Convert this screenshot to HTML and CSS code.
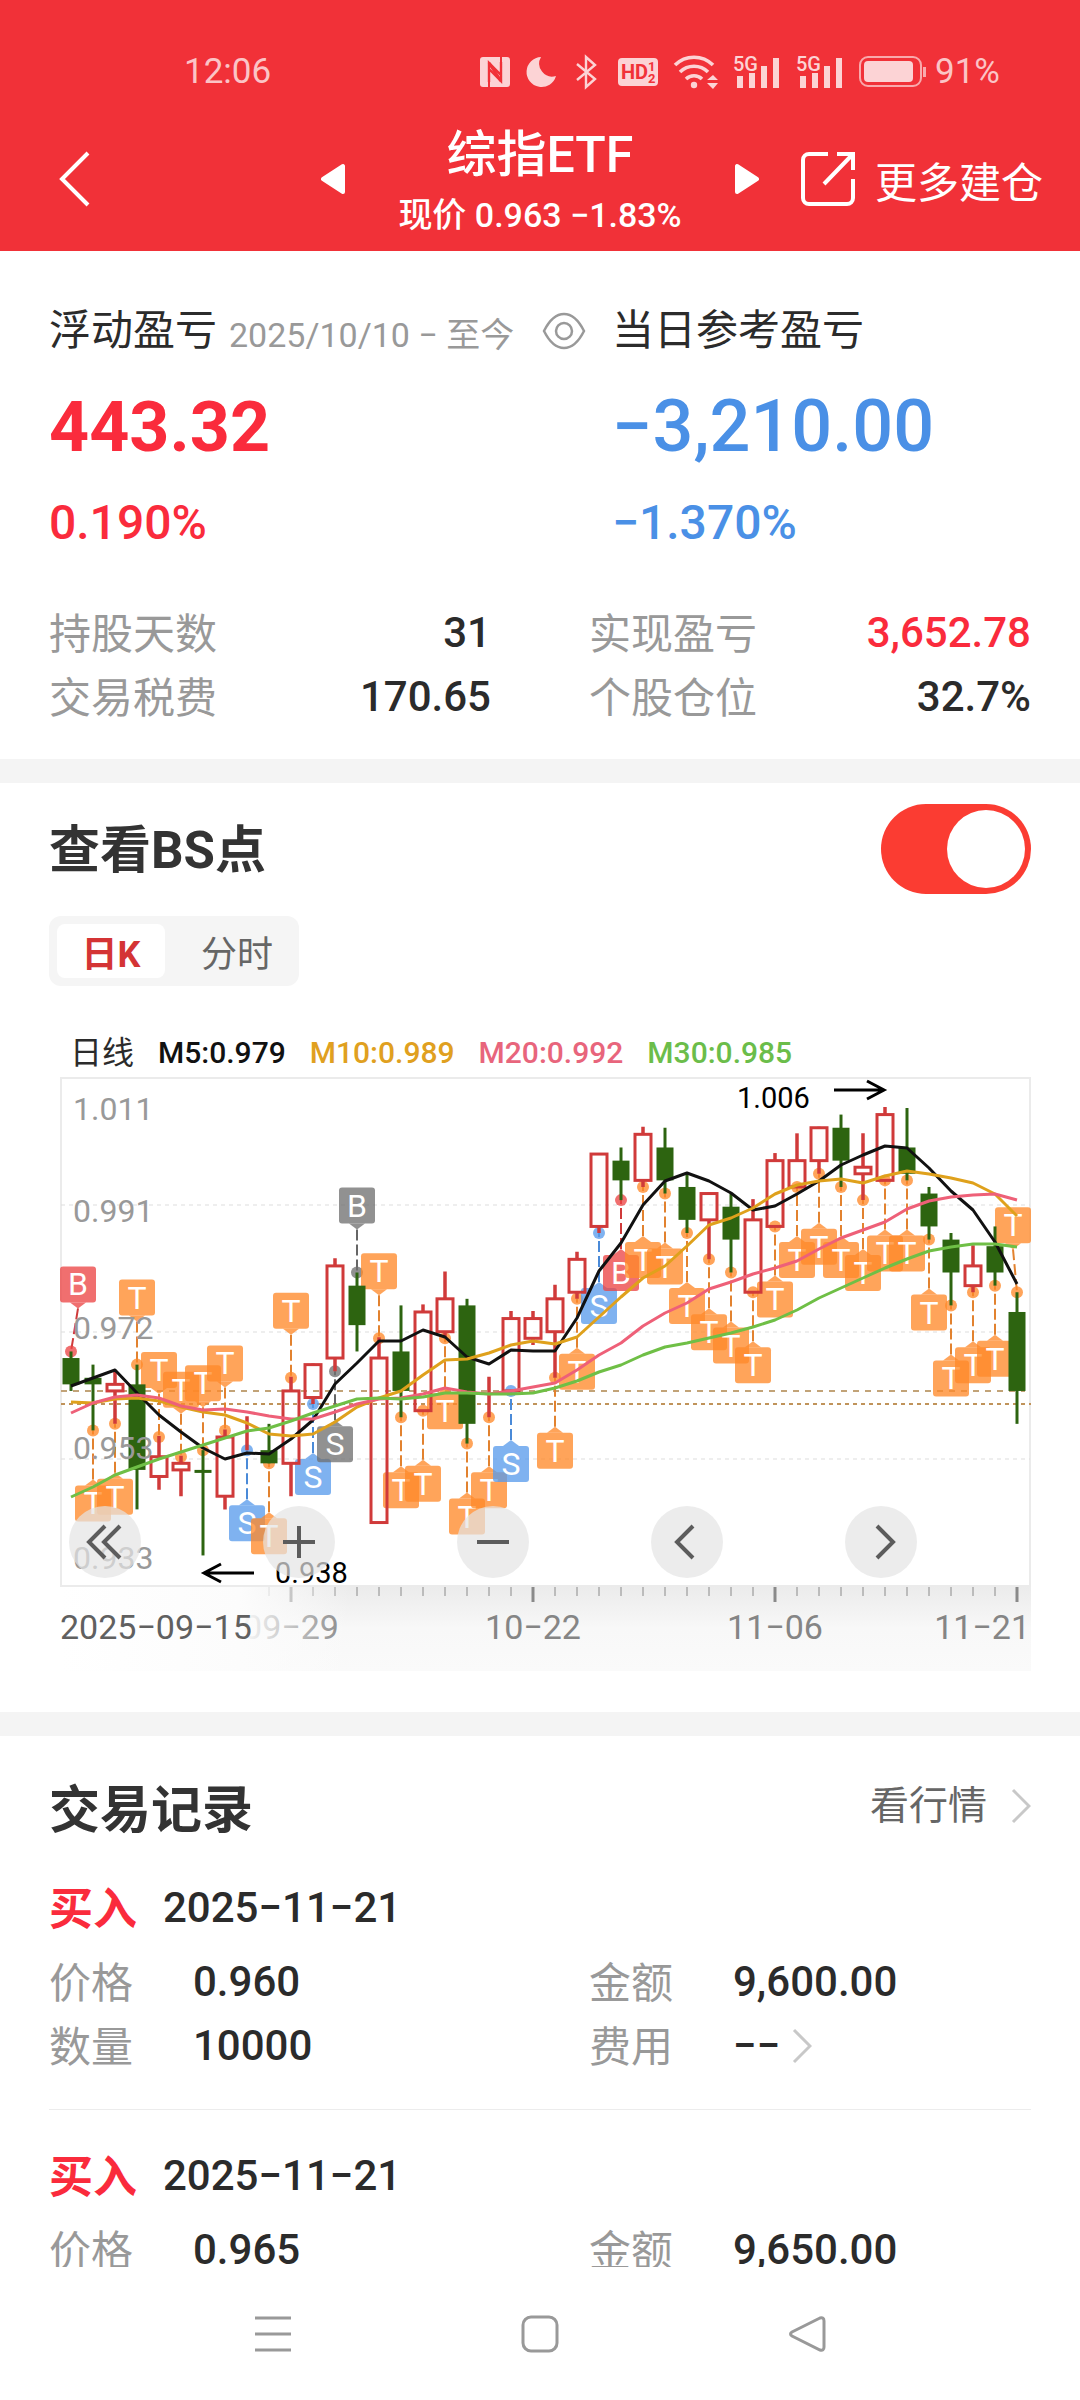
FILE: index.html
```html
<!DOCTYPE html>
<html lang="zh-CN">
<head>
    <meta charset="UTF-8">
    <meta name="viewport" content="width=device-width, initial-scale=1.0">
    <title>综指ETF</title>
    <link rel="stylesheet" href="styles.css">
</head>
<body>
    <div class="page">
        <header class="header">
            <div class="status-bar">
                <span class="time">12:06</span>
                <div class="status-icons">
                    <svg width="30" height="32" viewBox="0 0 30 32">
                        <rect x="0" y="1" width="30" height="30" rx="3" fill="#fcd3d5"/>
                        <path d="M9 26V7l12 12V6M21 6v19L9 13" fill="none" stroke="#f13138" stroke-width="2.4"/>
                        <path d="M9 7l12 18" stroke="#f13138" stroke-width="3"/>
                        <path d="M9 26v6M21 6V0" stroke="#f13138" stroke-width="2"/>
                    </svg>
                    <svg width="32" height="32" viewBox="0 0 32 32">
                        <path d="M15 1A15 15 0 1 0 30 20A13 13 0 0 1 15 1Z" fill="#fcd3d5"/>
                    </svg>
                    <svg width="28" height="34" viewBox="0 0 28 34">
                        <path d="M3 9l18 15-9 8V2l9 8L3 25" fill="none" stroke="#fcd3d5" stroke-width="2.4"/>
                    </svg>
                    <svg width="40" height="30" viewBox="0 0 40 30">
                        <rect x="0" y="1" width="40" height="28" rx="4" fill="#fcd3d5"/>
                        <text x="3" y="22" class="hd-text">HD</text>
                        <text x="30" y="14" class="hd-small">1</text>
                        <text x="30" y="26" class="hd-small">2</text>
                    </svg>
                    <svg width="43" height="34" viewBox="0 0 43 34">
                        <g fill="none" stroke="#fcd3d5" stroke-width="3.6">
                            <path d="M1 10a27 27 0 0 1 38 0"/>
                            <path d="M6 17a20 20 0 0 1 28 0"/>
                            <path d="M12 24a11.500 11.500 0 0 1 16 0"/>
                        </g>
                        <circle cx="20" cy="30" r="3.200" fill="#fcd3d5"/>
                        <path d="M39 20l5 5H33zM39 34l5-6H33z" fill="#fcd3d5"/>
                    </svg>
                    <svg width="47" height="34" viewBox="0 0 47 34">
                        <text x="0" y="16" class="net-text">5G</text>
                        <path d="M7 21v12M19 18v15M31 11v22M43 3v30" stroke="#fcd3d5" stroke-width="6"/>
                    </svg>
                    <svg width="47" height="34" viewBox="0 0 47 34">
                        <text x="0" y="16" class="net-text">5G</text>
                        <path d="M7 21v12M19 18v15M31 11v22M43 3v30" stroke="#fcd3d5" stroke-width="6"/>
                    </svg>
                    <div class="battery">
                        <svg width="68" height="32" viewBox="0 0 68 32">
                            <rect x="1" y="1" width="61" height="29" rx="8" fill="none" stroke="#f9a9ac" stroke-width="2"/>
                            <rect x="5" y="5" width="49" height="21" rx="4" fill="#fcd3d5"/>
                            <path d="M65.500 11v10" stroke="#f9a9ac" stroke-width="3"/>
                        </svg>
                        <span>91%</span>
                    </div>
                </div>
            </div>
            <div class="nav">
                <button class="nav-back" aria-label="返回">
                    <svg width="32" height="56" viewBox="0 0 32 56"><path d="M29 2L3 28l26 26" fill="none" stroke="#fff" stroke-width="4"/></svg>
                </button>
                <div class="nav-center">
                    <button aria-label="上一个">
                        <svg width="24" height="32" viewBox="0 0 24 32"><path d="M22 3v26L2 16z" fill="#fff" stroke="#fff" stroke-width="4" stroke-linejoin="round"/></svg>
                    </button>
                    <div class="stock">
                        <h1>综指ETF</h1>
                        <p>现价 0.963 −1.83%</p>
                    </div>
                    <button aria-label="下一个">
                        <svg width="24" height="32" viewBox="0 0 24 32"><path d="M2 3v26l20-13z" fill="#fff" stroke="#fff" stroke-width="4" stroke-linejoin="round"/></svg>
                    </button>
                </div>
                <a class="nav-more" href="#">
                    <svg width="54" height="54" viewBox="0 0 54 54">
                        <path d="M27 2H8a6 6 0 0 0-6 6v38a6 6 0 0 0 6 6h38a6 6 0 0 0 6-6V27" fill="none" stroke="#fff" stroke-width="4"/>
                        <path d="M36 2h16v16M51 3L23 32" fill="none" stroke="#fff" stroke-width="4"/>
                    </svg>
                    更多建仓
                </a>
            </div>
        </header>

        <main class="content">
            <section class="summary">
                <div class="profit">
                    <div>
                        <div class="profit-label">
                            <span>浮动盈亏</span>
                            <small>2025/10/10 − 至今</small>
                            <button class="eye" aria-label="隐藏金额">
                                <svg width="44" height="40" viewBox="0 0 44 40">
                                    <path d="M2 20C8 8 15 3 22 3s14 5 20 17c-6 12-13 17-20 17S8 32 2 20z" fill="none" stroke="#999" stroke-width="2.5"/>
                                    <circle cx="22" cy="20" r="8" fill="none" stroke="#999" stroke-width="2.5"/>
                                </svg>
                            </button>
                        </div>
                        <div class="amount amount-bold red">443.32</div>
                        <div class="percent red">0.190%</div>
                    </div>
                    <div>
                        <div class="profit-label">当日参考盈亏</div>
                        <div class="amount blue">−3,210.00</div>
                        <div class="percent blue">−1.370%</div>
                    </div>
                </div>
                <dl class="stats">
                    <div><dt>持股天数</dt><dd>31</dd></div>
                    <div><dt>实现盈亏</dt><dd class="red">3,652.78</dd></div>
                    <div><dt>交易税费</dt><dd>170.65</dd></div>
                    <div><dt>个股仓位</dt><dd>32.7%</dd></div>
                </dl>
            </section>

            <section class="bs">
                <div class="section-head">
                    <h2><label for="bs-switch">查看BS点</label></h2>
                    <input type="checkbox" id="bs-switch" class="switch" checked>
                </div>
                <div class="tabs">
                    <button class="tab active">日K</button>
                    <button class="tab">分时</button>
                </div>
                <div class="legend">
                    <span class="legend-title">日线</span>
                    <span class="m5">M5:0.979</span>
                    <span class="m10">M10:0.989</span>
                    <span class="m20">M20:0.992</span>
                    <span class="m30">M30:0.985</span>
                </div>
                <div class="chart">
                    <svg id="kline" viewBox="0 0 982 594"></svg>
                    <div class="chart-tools">
                        <button aria-label="最早">
                            <svg width="40" height="40" viewBox="0 0 40 40"><path d="M20 4L4 20l16 16M35 4L19 20l16 16"/></svg>
                        </button>
                        <button aria-label="放大">
                            <svg width="40" height="40" viewBox="0 0 40 40"><path d="M20 4v32M4 20h32"/></svg>
                        </button>
                        <button aria-label="缩小">
                            <svg width="40" height="40" viewBox="0 0 40 40"><path d="M4 20h32"/></svg>
                        </button>
                        <button aria-label="左移">
                            <svg width="40" height="40" viewBox="0 0 40 40"><path d="M26 4L10 20l16 16"/></svg>
                        </button>
                        <button aria-label="右移">
                            <svg width="40" height="40" viewBox="0 0 40 40"><path d="M16 4l16 16-16 16"/></svg>
                        </button>
                    </div>
                </div>
            </section>

            <section class="records">
                <div class="section-head">
                    <h2>交易记录</h2>
                    <a class="more" href="#">
                        看行情
                        <svg width="20" height="36" viewBox="0 0 20 36"><path d="M2 2l16 16L2 34"/></svg>
                    </a>
                </div>
                <article class="record">
                    <h3><b>买入</b>2025−11−21</h3>
                    <dl>
                        <div><dt>价格</dt><dd>0.960</dd></div>
                        <div><dt>金额</dt><dd>9,600.00</dd></div>
                        <div><dt>数量</dt><dd>10000</dd></div>
                        <div>
                            <dt>费用</dt>
                            <dd>−−<svg width="20" height="36" viewBox="0 0 20 36"><path d="M2 2l16 16L2 34"/></svg></dd>
                        </div>
                    </dl>
                </article>
                <article class="record">
                    <h3><b>买入</b>2025−11−21</h3>
                    <dl>
                        <div><dt>价格</dt><dd>0.965</dd></div>
                        <div><dt>金额</dt><dd>9,650.00</dd></div>
                    </dl>
                </article>
            </section>
        </main>

        <nav class="system-nav">
            <button aria-label="最近任务">
                <svg width="38" height="38" viewBox="0 0 38 38"><path d="M1 3h36M1 19h36M1 35h36"/></svg>
            </button>
            <button aria-label="主页">
                <svg width="38" height="38" viewBox="0 0 38 38"><rect x="2" y="2" width="34" height="34" rx="8"/></svg>
            </button>
            <button aria-label="返回">
                <svg width="38" height="38" viewBox="0 0 38 38"><path d="M32 3L4 17q-3 2 0 4l28 14q4 1 4-3V6q0-4-4-3z"/></svg>
            </button>
        </nav>
    </div>
    <script src="chart.js"></script>
</body>
</html>
```
FILE: styles.css
```css
* {
    box-sizing: border-box;
    margin: 0;
    padding: 0;
}
body {
    background: #fff;
    color: #2b2b2b;
    font-family: Roboto, "Noto Sans CJK SC", sans-serif;
}
button {
    border: none;
    background: none;
    font-family: inherit;
    cursor: pointer;
}
a {
    color: inherit;
    text-decoration: none;
}
svg {
    display: block;
    flex: none;
}
.page {
    display: flex;
    flex-direction: column;
    height: 100vh;
}
.red {
    color: #fa2b3c;
}
.blue {
    color: #4a90e6;
}

/* Header */
.header {
    flex: none;
    background: #f13138;
    color: #fff;
}
.status-bar {
    display: flex;
    justify-content: space-between;
    align-items: center;
    padding: 24px 80px 0 184px;
    height: 119px;
    color: #fbc4c6;
    font-size: 35px;
}
.status-icons {
    display: flex;
    align-items: center;
    gap: 16px;
}
.status-icons svg {
    overflow: visible;
}
.battery {
    display: flex;
    align-items: center;
    gap: 8px;
}
.hd-text {
    font-size: 20px;
    font-weight: 700;
    fill: #f13138;
}
.hd-small {
    font-size: 13px;
    font-weight: 700;
    fill: #f13138;
}
.net-text {
    font-size: 20px;
    font-weight: 500;
    fill: #fcd3d5;
}
.nav {
    display: grid;
    grid-template-columns: 1fr 438px 1fr;
    align-items: center;
    padding-bottom: 12px;
}
.nav-back {
    padding-left: 59px;
    justify-self: start;
}
.nav-center {
    display: flex;
    justify-content: space-between;
    align-items: center;
}
.stock {
    text-align: center;
}
.stock h1 {
    font-size: 50px;
    font-weight: 500;
    line-height: 72px;
}
.stock p {
    font-size: 34px;
    font-weight: 500;
    line-height: 48px;
}
.nav-more {
    display: flex;
    align-items: center;
    gap: 20px;
    padding-left: 42px;
    font-size: 42px;
    white-space: nowrap;
}

/* Profit summary */
.content {
    flex: 1;
    min-height: 0;
    overflow: hidden;
}
.summary {
    padding: 50px 49px 30px;
    border-bottom: 24px solid #f4f4f4;
}
.profit {
    display: grid;
    grid-template-columns: 563fr 419fr;
}
.profit-label {
    display: flex;
    align-items: center;
    font-size: 42px;
    line-height: 60px;
    white-space: nowrap;
}
.profit-label small {
    margin-left: 12px;
    padding-top: 8px;
    font-size: 34px;
    line-height: 52px;
    color: #999;
}
.eye {
    margin: 0 26px 0 auto;
}
.amount {
    margin-top: 16px;
    font-size: 72px;
    font-weight: 500;
    line-height: 100px;
}
.amount-bold {
    font-size: 70px;
    font-weight: 700;
}
.percent {
    margin-top: 16px;
    font-size: 48px;
    font-weight: 500;
    line-height: 60px;
}
.stats {
    display: grid;
    grid-template-columns: 1fr 1fr;
    column-gap: 98px;
    margin-top: 48px;
    font-size: 42px;
    line-height: 64px;
}
.stats div {
    display: flex;
    justify-content: space-between;
}
dt {
    padding-top: 4px;
    line-height: 60px;
    color: #999;
}
dd {
    font-weight: 500;
}

/* BS chart */
.section-head {
    display: flex;
    justify-content: space-between;
    align-items: center;
}
.section-head h2 {
    padding-top: 4px;
    font-size: 51px;
    font-weight: 700;
    line-height: 62px;
    color: #333;
}
.bs {
    padding: 21px 49px 41px;
    border-bottom: 24px solid #f4f4f4;
}
.switch {
    appearance: none;
    width: 150px;
    height: 90px;
    padding: 6px;
    border-radius: 45px;
    background: #ccc;
    cursor: pointer;
}
.switch::before {
    content: "";
    display: block;
    width: 78px;
    height: 78px;
    border-radius: 50%;
    background: #fff;
}
.switch:checked {
    background: #fb3c32;
}
.switch:checked::before {
    margin-left: auto;
}
.tabs {
    display: inline-flex;
    gap: 18px;
    margin-top: 22px;
    padding: 8px;
    border-radius: 12px;
    background: #f5f5f5;
    vertical-align: top;
}
.tab {
    width: 108px;
    height: 54px;
    border-radius: 8px;
    font-size: 36px;
    color: #666;
}
.tab.active {
    background: #fff;
    color: #d43435;
    font-weight: 700;
}
.legend {
    display: flex;
    gap: 24px;
    margin-top: 47px;
    padding-left: 21px;
    font-size: 30px;
    font-weight: 500;
    line-height: 40px;
    white-space: nowrap;
}
.legend-title {
    font-size: 32px;
    font-weight: 400;
}
.m5 { color: #111; }
.m10 { color: #e0a020; }
.m20 { color: #e8657c; }
.m30 { color: #6bbd4a; }
.chart {
    position: relative;
    margin-top: 4px;
}
#kline {
    width: 100%;
}
.chart-tools {
    position: absolute;
    left: 20px;
    bottom: 93px;
    display: flex;
    gap: 122px;
}
.chart-tools button {
    display: flex;
    align-items: center;
    justify-content: center;
    width: 72px;
    height: 72px;
    border-radius: 50%;
    background: rgba(228, 228, 228, 0.7);
}
.chart-tools path {
    fill: none;
    stroke: #5c5c5c;
    stroke-width: 4;
}
.grid-line { stroke: #ddd; stroke-dasharray: 4 4; }
.axis-label { font-size: 32px; fill: #999; }
.date-label { font-size: 34px; fill: #858585; }
.date-start { fill: #606060; }
.peak-label { font-size: 29px; fill: #000; }
.marker-text { font-size: 32px; fill: #fff; text-anchor: middle; }

/* Trade records */
.records {
    padding: 40px 49px 0;
}
.more {
    display: flex;
    align-items: center;
    gap: 24px;
    font-size: 39px;
    line-height: 56px;
    padding-bottom: 6px;
    color: #666;
}
.more path, dd path {
    fill: none;
    stroke: #c8c8c8;
    stroke-width: 3;
}
.record {
    padding: 36px 0 31px;
    border-bottom: 1px solid #ececec;
}
.record h3 {
    display: flex;
    gap: 26px;
    font-size: 42px;
    font-weight: 500;
    line-height: 60px;
}
.record b {
    padding-top: 2px;
    font-size: 44px;
    color: #fa2b3c;
}
.record dl {
    display: grid;
    grid-template-columns: 1fr 1fr;
    column-gap: 98px;
    margin-top: 10px;
    font-size: 42px;
    line-height: 64px;
}
.record dl div {
    display: flex;
}
.record dt {
    width: 144px;
}
.record dd {
    display: flex;
    align-items: center;
    gap: 12px;
}

/* System navigation */
.system-nav {
    flex: none;
    display: flex;
    justify-content: center;
    gap: 229px;
    height: 133px;
    background: #fff;
}
.system-nav svg {
    fill: none;
    stroke: #999;
    stroke-width: 3;
}
```
FILE: chart.js
```js
const svg = document.getElementById('kline');
const STEP = 22;
const px = i => STEP + i * STEP;
// price is in thousandths
const py = p => 31 + (1006 - p) * 6.58;

// [high, body top, body bottom, low, rising, marker]
// marker: letter, "^" = above the candle, "g" = grey
const candles = [
    [969, 968, 964, 963, 0, 'B^'], [967, 965, 964, 957, 0, 'T'], [966, 964, 963, 958, 1, 'T'],
    [967, 964, 951, 945, 0, 'T^'], [956, 953, 950, 948, 1, 'T^'], [953, 952, 951, 947, 1, 'T^'],
    [954, 951, 951, 938, 0, 'T^'], [957, 956, 947, 945, 1, 'T^'], [959, 956, 956, 954, 1, 'S'],
    [958, 954, 952, 952, 0, 'T'], [965, 963, 952, 947, 1, 'T^'], [967, 967, 962, 961, 1, 'S'],
    [983, 982, 968, 966, 1, 'Sg'], [981, 979, 973, 969, 0, 'B^g'], [971, 968, 943, 943, 1, 'T^'],
    [976, 969, 963, 959, 0, 'T'], [976, 975, 960, 960, 1, 'T'], [981, 977, 972, 971, 1, 'T'],
    [977, 976, 958, 955, 0, 'T'], [965, 962, 962, 959, 1, 'T'], [975, 974, 963, 963, 1, 'S'],
    [975, 974, 971, 970, 1, ''], [979, 977, 972, 965, 1, 'T'], [984, 983, 978, 977, 1, 'T'],
    [999, 999, 988, 987, 1, 'S'], [1000, 998, 995, 992, 0, 'B'], [1003, 1002, 995, 994, 1, 'T'],
    [1003, 1000, 995, 993, 0, 'T'], [996, 994, 989, 987, 0, 'T'], [993, 993, 989, 983, 1, 'T'],
    [993, 991, 986, 981, 0, 'T'], [992, 989, 978, 978, 1, 'T'], [999, 998, 988, 988, 1, 'T'],
    [1002, 998, 994, 994, 1, 'T'], [1003, 1003, 998, 996, 1, 'T'], [1005, 1003, 998, 994, 0, 'T'],
    [1002, 997, 996, 992, 1, 'T'], [1006, 1005, 995, 995, 1, 'T'], [1006, 1000, 996, 995, 0, 'T'],
    [994, 993, 988, 986, 0, 'T'], [987, 986, 981, 976, 0, 'T'], [985, 982, 979, 978, 1, 'T'],
    [988, 985, 981, 979, 0, 'T'], [978, 975, 963, 958, 0, 'T^']
];

const averages = {
    '#111111': [309, 301, 293, 316, 338, 355, 371, 382, 376, 377, 362, 343, 307, 286, 264, 264, 253, 260, 280, 287, 273, 274, 274, 241, 194, 166, 128, 104, 96, 104, 116, 133, 129, 117, 104, 88, 78, 69, 71, 91, 114, 133, 165, 207],
    '#dfa11c': [325, 326, 322, 321, 324, 330, 335, 338, 346, 357, 359, 357, 345, 330, 321, 314, 298, 283, 282, 276, 268, 264, 267, 260, 240, 220, 201, 189, 169, 148, 141, 131, 117, 108, 104, 102, 106, 99, 94, 97, 101, 106, 117, 139],
    '#ee6078': [336, 326, 320, 318, 321, 329, 333, 332, 335, 339, 342, 342, 335, 327, 322, 321, 317, 311, 315, 317, 314, 310, 306, 293, 278, 266, 249, 236, 226, 212, 205, 197, 191, 184, 172, 161, 153, 145, 132, 124, 120, 118, 117, 123],
    '#6fbf46': [420, 410, 398, 390, 382, 375, 368, 361, 354, 351, 344, 336, 329, 322, 321, 322, 320, 316, 316, 317, 317, 316, 311, 304, 295, 288, 278, 270, 266, 261, 256, 250, 243, 233, 221, 211, 201, 191, 182, 174, 170, 167, 167, 170]
};

const fills = { T: '#ff8828', B: '#eb4444', S: '#589bec', g: '#707070' };
const lines = { T: '#e2822f', B: '#cf3a3a', S: '#4a8ad8', g: '#666666' };

let out = `
    <defs>
        <linearGradient id="axis-bg" x1="0" y1="0" x2="0" y2="1">
            <stop offset="0" stop-color="#ebebeb"/>
            <stop offset="0.5" stop-color="#f8f8f8"/>
            <stop offset="1" stop-color="#fafafa"/>
        </linearGradient>
        <linearGradient id="axis-fade">
            <stop offset="0" stop-color="#fff"/>
            <stop offset="0.62" stop-color="#fcfcfc"/>
            <stop offset="1" stop-color="#fcfcfc" stop-opacity="0"/>
        </linearGradient>
    </defs>
    <rect x="11" y="509" width="971" height="85" fill="url(#axis-bg)"/>`;

// axis ticks and dates
candles.forEach((c, i) => {
    if (i < 9) return;
    const major = (i - 10) % 11 === 0;
    out += `<path d="M${px(i)} 510v${major ? 15 : 9}" stroke="#8a8a8a" stroke-width="${major ? 3 : 1}"/>`;
});
out += `
    <text class="date-label" x="${px(10)}" y="562" text-anchor="middle">09−29</text>
    <text class="date-label" x="${px(21)}" y="562" text-anchor="middle">10−22</text>
    <text class="date-label" x="${px(32)}" y="562" text-anchor="middle">11−06</text>
    <text class="date-label" x="981" y="562" text-anchor="end">11−21</text>
    <rect x="11" y="510" width="290" height="84" fill="url(#axis-fade)"/>
    <text class="date-label date-start" x="11" y="562">2025−09−15</text>
    <rect x="12" y="1" width="969" height="508" fill="none" stroke="#ebebeb" stroke-width="2"/>`;

// grid, last price and cost lines
[128, 255, 382].forEach(y => {
    out += `<path class="grid-line" d="M12 ${y}H981"/>`;
});
out += `
    <path d="M12 314H976" stroke="#c2a378" stroke-width="2" stroke-dasharray="6 6"/>
    <path d="M12 327H982" stroke="#c0935a" stroke-width="2" stroke-dasharray="4 4"/>`;

// trade markers
candles.forEach(([high, , , low, , mark], i) => {
    if (!mark) return;
    const type = mark[0];
    const key = mark.includes('g') ? 'g' : type;
    const above = mark.includes('^');
    const dot = py(above ? high : low);
    const x = px(i);
    const cx = Math.min(Math.max(x, 29), 964);
    const top = above ? dot - 85 : dot + 55;
    const tip = above ? top + 42 : top - 6;
    const base = above ? top + 36 : top;
    out += `<path d="M${cx} ${tip}L${x} ${dot}" stroke="${lines[key]}" stroke-width="2" stroke-dasharray="11 4"/>
        <g fill="${fills[key]}" fill-opacity="0.77">
            <circle cx="${x}" cy="${dot}" r="6"/>
            <rect x="${cx - 18}" y="${top}" width="36" height="36" rx="3"/>
            <path d="M${cx - 8} ${base}h16L${cx} ${tip}z"/>
        </g>
        <text class="marker-text" x="${cx}" y="${top + 29}">${type}</text>`;
});

// candles
candles.forEach(([high, top, bottom, low, up], i) => {
    const x = px(i);
    const h = (top - bottom) * 6.58;
    if (up) {
        out += `<path d="M${x} ${py(high) - 1}V${py(top)}M${x} ${py(bottom)}V${py(low)}" stroke="#d03a3a" stroke-width="3.5"/>
            <rect x="${x - 8}" y="${py(top)}" width="16" height="${h}" fill="none" stroke="#d03a3a" stroke-width="3"/>`;
    } else {
        out += `<path d="M${x} ${py(high)}V${py(low)}" stroke="#2d6410" stroke-width="3"/>
            <rect x="${x - 8.5}" y="${py(top)}" width="17" height="${Math.max(h, 3)}" fill="#2d6410"/>`;
    }
});

// moving averages
for (const color in averages) {
    const points = averages[color].map((y, i) => px(i) + ',' + y).join(' ');
    out += `<polyline points="${points}" fill="none" stroke="${color}" stroke-width="3" stroke-linejoin="round"/>`;
}

out += `
    <text class="axis-label" x="24" y="43">1.011</text>
    <text class="axis-label" x="24" y="145">0.991</text>
    <text class="axis-label" x="24" y="262">0.972</text>
    <text class="axis-label" x="24" y="382">0.953</text>
    <text class="axis-label" x="24" y="492">0.933</text>
    <text class="peak-label" x="688" y="31">1.006</text>
    <path d="M785 13h50M818 4l17 9-17 9" fill="none" stroke="#000" stroke-width="3"/>
    <text class="peak-label" x="226" y="506">0.938</text>
    <path d="M205 496h-50M172 487l-17 9 17 9" fill="none" stroke="#000" stroke-width="3"/>`;

svg.innerHTML = out;
```
